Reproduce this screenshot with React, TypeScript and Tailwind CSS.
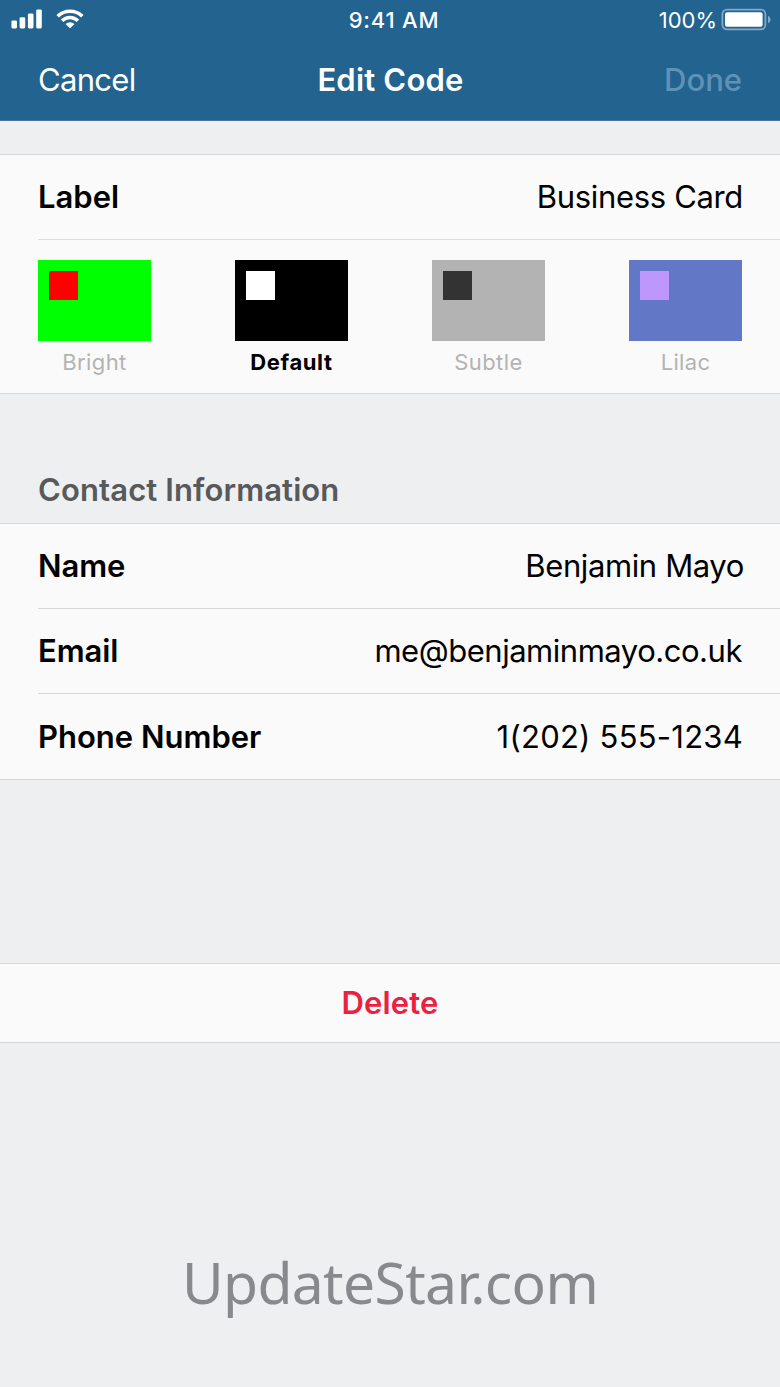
import React from "react";

function SignalIcon() {
  return (
    <svg className="h-5 w-8" viewBox="0 0 32 20" fill="#fff">
      <rect x="0.4" y="11.4" width="5.6" height="8" rx="1.3" />
      <rect x="8.6" y="8.2" width="5.6" height="11.2" rx="1.3" />
      <rect x="16.9" y="4.5" width="5.6" height="14.9" rx="1.3" />
      <rect x="25.2" y="0.5" width="5.6" height="18.9" rx="1.3" />
    </svg>
  );
}

function WifiIcon() {
  return (
    <svg className="h-5 w-7" viewBox="0 0 28 20">
      <g fill="none" stroke="#fff" strokeWidth="3.6">
        <path d="M1.7 7.2A17.6 17.6 0 0 1 26.3 7.2" />
        <path d="M6.1 11.7A11.2 11.2 0 0 1 21.9 11.7" />
      </g>
      <path d="M9.5 15A6.4 6.4 0 0 1 18.5 15L14.6 18.8Q14 19.4 13.4 18.8Z" fill="#fff" />
    </svg>
  );
}

function BatteryIcon() {
  return (
    <svg className="h-6 w-[51px]" viewBox="0 0 51 24">
      <rect x="2.4" y="1.6" width="43" height="19.8" rx="4.6" fill="none" stroke="#84a9c3" strokeWidth="1.8" />
      <rect x="5" y="4.2" width="37.6" height="14.6" rx="2" fill="#fff" />
      <path d="M48 7.7Q50.6 8.9 50.6 11.5T48 15.3Z" fill="#84a9c3" />
    </svg>
  );
}

type SwatchProps = {
  label: string;
  card: string;
  mark: string;
  text: string;
};

const swatches: SwatchProps[] = [
  { label: "Bright", card: "bg-[#00ff00]", mark: "bg-[#ff0000]", text: "text-[#b3b3b3] tracking-[0.37px]" },
  { label: "Default", card: "bg-black", mark: "bg-white", text: "font-bold text-black tracking-[0.6px]" },
  { label: "Subtle", card: "bg-[#b3b3b3]", mark: "bg-[#333333]", text: "text-[#b3b3b3] tracking-[0.4px]" },
  { label: "Lilac", card: "bg-[#6277c6]", mark: "bg-[#bd97fc]", text: "text-[#b3b3b3] tracking-[0.31px]" },
];

function Swatch({ label, card, mark, text }: SwatchProps) {
  return (
    <div className="flex w-[113px] flex-col items-center">
      <div className={`h-[80.5px] w-full p-[11px] ${card}`}>
        <div className={`h-[28.5px] w-[28.5px] ${mark}`} />
      </div>
      <span className={`mt-[7.5px] text-[22px] leading-7 ${text}`}>{label}</span>
    </div>
  );
}

type RowProps = {
  label: string;
  value: string;
  labelClass?: string;
  valueClass: string;
  height: string;
};

function Row({ label, value, labelClass = "", valueClass, height }: RowProps) {
  return (
    <div className={`flex items-center justify-between ${height}`}>
      <span className={`font-semibold ${labelClass}`}>{label}</span>
      <span className={valueClass}>{value}</span>
    </div>
  );
}

export default function App() {
  return (
    <div className="flex h-[1387px] w-[780px] flex-col overflow-hidden bg-[#edeff1] font-['Inter','Liberation_Sans',sans-serif] text-[31px] leading-10 text-black">
      <header className="h-[121px] border-b border-[#47789b] bg-[#22638f] text-white">
        <div className="grid h-10 grid-cols-3 items-center text-[22px]">
          <div className="flex items-center gap-[13px] pl-[11px] pb-[2px]">
            <SignalIcon />
            <WifiIcon />
          </div>
          <div className="pl-[8px] text-center font-medium tracking-[0.8px]">9:41 AM</div>
          <div className="flex items-center justify-end gap-[3px] pr-[9px]">
            <span>100%</span>
            <BatteryIcon />
          </div>
        </div>
        <nav className="grid h-[80px] grid-cols-3 items-center px-[38px]">
          <span className="tracking-[-0.68px]">Cancel</span>
          <span className="pl-px text-center font-semibold tracking-[0.2px]">Edit Code</span>
          <span className="text-right font-medium text-[#5f92b6]">Done</span>
        </nav>
      </header>

      <section className="mt-[33px] h-[240px] border-y border-[#d5d7da] bg-[#fafafa]">
        <div className="ml-[38px] border-b border-[#dcdee0] pr-[37px]">
          <Row label="Label" value="Business Card" valueClass="tracking-[-0.33px]" height="h-[84px]" />
        </div>
        <div className="flex justify-between pt-5 pr-[38px] pl-[38px]">
          {swatches.map((s) => (
            <Swatch key={s.label} {...s} />
          ))}
        </div>
      </section>

      <h2 className="mt-[76px] pl-[38px] font-semibold tracking-[0.11px] text-[#58595b]">Contact Information</h2>

      <section className="mt-[13px] border-y border-[#d5d7da] bg-[#fafafa] pl-[38px]">
        <div className="border-b border-[#d5d7da] pr-[36px]">
          <Row label="Name" value="Benjamin Mayo" labelClass="tracking-[-0.1px]" valueClass="tracking-[-0.38px]" height="h-[84px]" />
        </div>
        <div className="border-b border-[#d5d7da] pr-[38px]">
          <Row label="Email" value="me@benjaminmayo.co.uk" labelClass="tracking-[-0.1px]" valueClass="tracking-[-0.47px]" height="h-[84px]" />
        </div>
        <div className="pr-[37px]">
          <Row label="Phone Number" value="1(202) 555-1234" valueClass="tracking-[0.24px]" height="h-[85px]" />
        </div>
      </section>

      <button className="mt-[183px] h-[80px] w-full shrink-0 border-y border-[#d5d7da] bg-[#fafafa] text-center font-semibold tracking-[0.18px] text-[#eb2140]">
        Delete
      </button>

      <footer className="mt-[199px] text-center font-['Noto_Sans','Open_Sans',sans-serif] text-[57px] leading-[80px] tracking-[-0.65px] text-[#87898c]">
        UpdateStar.com
      </footer>
    </div>
  );
}
